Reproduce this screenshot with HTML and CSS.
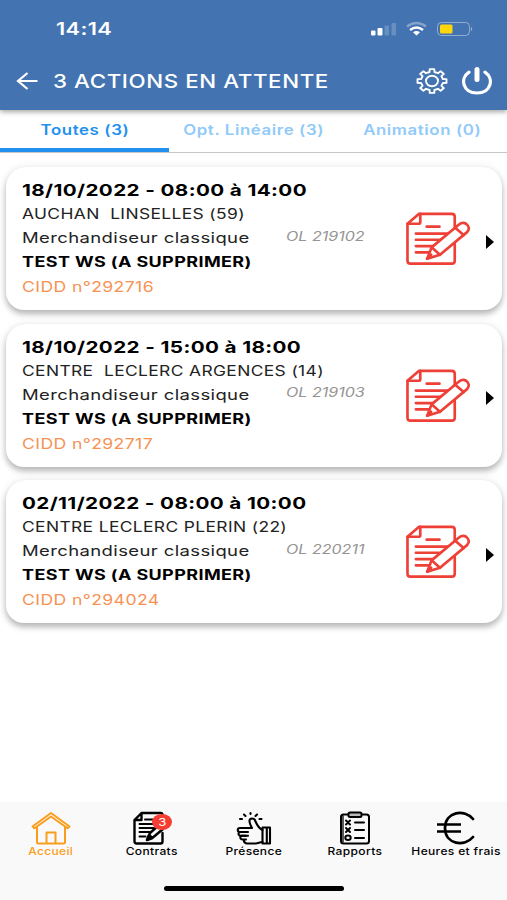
FILE: index.html
```html
<!DOCTYPE html>
<html lang="fr">
<head>
    <meta charset="UTF-8">
    <meta name="viewport" content="width=device-width, initial-scale=1.0">
    <title>Actions en attente</title>
    <link rel="stylesheet" href="styles.css">
</head>
<body>
    <svg width="0" height="0" class="defs">
        <symbol id="contract" viewBox="0 0 66 54">
            <g fill="none" stroke="currentColor" stroke-width="2.7" stroke-linejoin="round" stroke-linecap="round">
                <path d="M49.500 17V4.500q0-3-3-3H13L1.500 11.500v37.500q0 3 3 3h42q3 0 3-3V32"/>
                <path d="M1.500 11.500H13q1.500 0 1.500-1.500V1.500" />
                <path d="M21 14.500h13M10 21.500h34M10 27.800h27M10 34.200h20M10 40.500h14"/>
                <path class="pen" d="M21.500 47l4.500-11.500L53.500 12.500q4-3 7.500-1 5 4 1 8.500L34.500 43z"/>
                <path d="M26 35.500l8.500 7.500M50 15.500l8.500 7.500M21.500 47l4-4"/>
            </g>
        </symbol>
    </svg>

    <header class="header">
        <div class="status">
            <span class="time">14:14</span>
            <svg class="indicators" width="104" height="16" viewBox="0 0 104 16">
                <g fill="#fff">
                    <rect x="0" y="9.500" width="4.500" height="5" rx="1"/>
                    <rect x="6.500" y="7" width="5" height="7.500" rx="1"/>
                    <rect x="13.500" y="4.500" width="4.500" height="10" rx="1" opacity=".2"/>
                    <rect x="20.500" y="2" width="4.500" height="12.500" rx="1" opacity=".2"/>
                </g>
                <g fill="none" stroke="#fff" stroke-width="2.300">
                    <path d="M36 5.500q9.500-7 19 0" opacity=".35"/>
                    <path d="M39 9q6.500-5 13 0"/>
                </g>
                <path d="M42 11.200q3.500-2.400 7 0l-3.500 3.300z" fill="#fff"/>
                <rect x="66.500" y="1.500" width="32" height="13" rx="4" fill="none" stroke="#fff" opacity=".4"/>
                <path d="M100 6q2.500 2 0 4z" fill="#fff" opacity=".5"/>
                <rect x="69" y="3.500" width="12.500" height="9" rx="1.500" fill="#ffd60a"/>
            </svg>
        </div>
        <div class="title-bar">
            <svg class="back" width="22" height="18" viewBox="0 0 22 18" fill="none" stroke="#fff" stroke-width="2.200">
                <path d="M21.500 9H2M11.500 1L2 9l9.500 8"/>
            </svg>
            <h1 class="title">3 ACTIONS EN ATTENTE</h1>
            <svg class="gear" width="32" height="26" viewBox="0 0 32 26" fill="none" stroke="#fff" stroke-width="1.900" stroke-linejoin="round">
                <path d="M13.600 4l.1-2.900h4.600l.1 2.900L22 5.200l2.600-1.900 3.300 2.600-2.500 2.200 1.500 2.900 3.600.1v3.800l-3.600.1-1.500 2.900 2.500 2.200-3.300 2.600-2.600-1.900-3.600 1.200-.1 2.900h-4.600l-.1-2.900-3.600-1.200-2.600 1.900-3.300-2.600 2.500-2.200L5.100 15l-3.600-.1v-3.800l3.600-.1 1.500-2.900-2.500-2.200 3.300-2.600L10 5.200z"/>
                <ellipse cx="16" cy="13" rx="6" ry="5.200"/>
            </svg>
            <svg class="power" width="30" height="28" viewBox="0 0 30 28" fill="none" stroke="#fff" stroke-linecap="round">
                <path d="M7 5.200C-2.500 11.500 1 26 15 26S32.500 11.500 23 5.200" stroke-width="3.200"/>
                <path d="M15 2.500v10" stroke-width="5"/>
            </svg>
        </div>
    </header>

    <nav class="tabs">
        <a class="tab active"><span>Toutes (3)</span></a>
        <a class="tab"><span>Opt. Linéaire (3)</span></a>
        <a class="tab"><span>Animation (0)</span></a>
    </nav>

    <main class="list">
        <article class="card">
            <div class="info">
                <p class="date"><span>18/10/2022 - 08:00 à 14:00</span></p>
                <p class="place"><span>AUCHAN&nbsp; LINSELLES (59)</span></p>
                <p class="job"><span>Merchandiseur classique</span></p>
                <p class="mission"><span>TEST WS (A SUPPRIMER)</span></p>
                <p class="cidd"><span>CIDD n°292716</span></p>
            </div>
            <p class="ref"><span>OL 219102</span></p>
            <svg class="sign"><use href="#contract"/></svg>
            <i class="arrow"></i>
        </article>

        <article class="card">
            <div class="info">
                <p class="date"><span>18/10/2022 - 15:00 à 18:00</span></p>
                <p class="place"><span>CENTRE&nbsp; LECLERC ARGENCES (14)</span></p>
                <p class="job"><span>Merchandiseur classique</span></p>
                <p class="mission"><span>TEST WS (A SUPPRIMER)</span></p>
                <p class="cidd"><span>CIDD n°292717</span></p>
            </div>
            <p class="ref"><span>OL 219103</span></p>
            <svg class="sign"><use href="#contract"/></svg>
            <i class="arrow"></i>
        </article>

        <article class="card">
            <div class="info">
                <p class="date"><span>02/11/2022 - 08:00 à 10:00</span></p>
                <p class="place"><span>CENTRE LECLERC PLERIN (22)</span></p>
                <p class="job"><span>Merchandiseur classique</span></p>
                <p class="mission"><span>TEST WS (A SUPPRIMER)</span></p>
                <p class="cidd"><span>CIDD n°294024</span></p>
            </div>
            <p class="ref"><span>OL 220211</span></p>
            <svg class="sign"><use href="#contract"/></svg>
            <i class="arrow"></i>
        </article>
    </main>

    <footer class="bottom">
        <div class="menu">
            <a class="item current">
                <svg width="40" height="34" viewBox="0 0 40 34" fill="none" stroke="currentColor" stroke-width="2" stroke-linejoin="round">
                    <path d="M6 15v16q0 1.500 1.500 1.500h25Q34 32.500 34 31V15M20 2L1.500 15.500l2 1.800L20 5.500l16.500 11.800 2-1.800z"/>
                    <path d="M15.500 32V21.500h9V32"/>
                </svg>
                <span>Accueil</span>
            </a>
            <a class="item">
                <svg width="40" height="34" viewBox="0 0 40 34" fill="none" stroke="currentColor" stroke-width="2.400" stroke-linejoin="round" stroke-linecap="round">
                    <path d="M30.500 22v8.500q0 2-2 2h-24q-2 0-2-2V9L9.500 2h19q2 0 2 2v3M2.500 9h7V2"/>
                    <path d="M13 8.500h8M7.500 13h16M7.500 17h14M7.500 21h10M7.500 25.500h6" stroke-width="2"/>
                    <path d="M15 29l3-7L27 14l4 4-9.500 8z" fill="#f9f9f9"/>
                    <path d="M15 29l2-5 3.500 3z" fill="currentColor"/>
                </svg>
                <b class="badge"><span>3</span></b>
                <span>Contrats</span>
            </a>
            <a class="item">
                <svg width="40" height="34" viewBox="0 0 40 34" fill="none" stroke="currentColor" stroke-width="2.100" stroke-linejoin="round" stroke-linecap="round">
                    <path d="M29.500 19C26 17.500 24.500 15 22.500 10.500c-.8-4-6.500-4-6 0 .2 2.500 1.500 4.500 2.500 6.500H7c-3 0-3 4 0 4h6H7.500c-3 0-2.500 3.800.5 3.800h5H9c-2.500 0-2 3.700.5 3.700H13h-1.500c-1.500 2 .5 4 3 4h8c3 0 4-1.500 7-1.500"/>
                    <path d="M29.500 16.500H37V32.500h-7.500zM33.800 16.500v16M8 21h7M8.500 24.800H15"/>
                    <path d="M7 8h2M11 3.500l1.500 1.500M17.500 2v1M24 3.500L22.500 5M28.500 8h-2"/>
                </svg>
                <span>Présence</span>
            </a>
            <a class="item">
                <svg width="40" height="34" viewBox="0 0 40 34" fill="none" stroke="currentColor" stroke-width="2" stroke-linecap="round">
                    <rect x="6" y="3.500" width="28" height="29" rx="2.500"/>
                    <path d="M8 5v26" stroke-width="1.300"/>
                    <rect x="13.500" y="1.500" width="13" height="4.500" rx="1.500" fill="#bbb"/>
                    <path d="M11 9.500l4 4m0-4l-4 4M11 17l4 4m0-4l-4 4M20 11.500h9M20 19h9M20 27h9"/>
                    <ellipse cx="13" cy="26.800" rx="2.700" ry="2.200"/>
                </svg>
                <span>Rapports</span>
            </a>
            <a class="item">
                <svg width="40" height="34" viewBox="0 0 40 34" fill="none" stroke="currentColor" stroke-width="2.700">
                    <path d="M37 8C29-2 9 0 9 17s20 19 28 9" stroke-linecap="round"/>
                    <path d="M1 13.500h24M1 20.500h24"/>
                </svg>
                <span>Heures et frais</span>
            </a>
        </div>
        <div class="home-bar"></div>
    </footer>
</body>
</html>
```
FILE: styles.css
```css
* {
    box-sizing: border-box;
}

body {
    margin: 0;
    height: 900px;
    display: flex;
    flex-direction: column;
    background: #fff;
    color: #000;
    font-family: Inter, "Liberation Sans", sans-serif;
    overflow: hidden;
}

p, h1 {
    margin: 0;
    white-space: nowrap;
}

.defs {
    position: absolute;
}

.header {
    flex: none;
    height: 110px;
    background: #4373b1;
    color: #fff;
    box-shadow: 0 2px 5px rgba(0, 0, 0, 0.35);
    z-index: 1;
}

.status {
    display: flex;
    justify-content: space-between;
    align-items: center;
    height: 57px;
    padding: 0 32px 0 56px;
}

.time {
    font-size: 17px;
    font-weight: 600;
    letter-spacing: 0.3px;
    transform: scaleX(1.28);
    transform-origin: left;
}

.title-bar {
    display: flex;
    align-items: center;
    height: 48px;
    padding: 0 15px 0 16px;
}

.title {
    flex: 1;
    margin-left: 15px;
    font-size: 19px;
    font-weight: 500;
    letter-spacing: 0.5px;
    transform: scaleX(1.175);
    transform-origin: left;
}

.power {
    margin-left: 14px;
}

.tabs {
    flex: none;
    display: flex;
    height: 43px;
    border-bottom: 1px solid #c4c6ca;
}

.tab {
    flex: 1;
    height: 42px;
    text-align: center;
    line-height: 40px;
    font-size: 14px;
    font-weight: 600;
    color: #90caf9;
    white-space: nowrap;
}

.tab span {
    display: inline-block;
    letter-spacing: 0.5px;
    transform: scaleX(1.2);
}

.tab.active {
    color: #2190ee;
    border-bottom: 4px solid #2190ee;
}

.list {
    flex: 1;
    display: flex;
    flex-direction: column;
    gap: 13.5px;
    padding: 14px 5px 0 6px;
}

.card {
    position: relative;
    display: flex;
    align-items: center;
    height: 143px;
    padding: 1px 7px 0 16px;
    background: #fff;
    border-radius: 20px 20px 18px 18px;
    box-shadow: 0 4px 6px rgba(0, 0, 0, 0.27), 0 0 10px rgba(0, 0, 0, 0.07);
}

.info {
    width: 264px;
}

.info p {
    height: 24px;
    line-height: 24px;
    font-size: 14px;
    letter-spacing: 0.3px;
}

.info span, .ref span {
    display: inline-block;
    transform-origin: left;
}

.info .date {
    font-size: 16.5px;
    font-weight: 700;
}

.date span {
    transform: scaleX(1.252);
}

.info .place, .info .job {
    color: #222;
}

.place span {
    transform: scaleX(1.243);
}

.info .job {
    font-size: 14.5px;
}

.job span {
    transform: scaleX(1.275);
}

.info .mission {
    font-weight: 700;
}

.mission span {
    transform: scaleX(1.286);
}

.info .cidd {
    height: 26px;
    line-height: 26px;
    color: #f79254;
}

.cidd span {
    transform: scaleX(1.26);
}

.ref {
    width: 120px;
    margin-bottom: 6px;
    font-size: 12.5px;
    font-style: italic;
    color: #949494;
}

.ref span {
    transform: scaleX(1.285);
}

.sign {
    width: 65px;
    height: 54px;
    color: #ee4037;
}

.pen {
    fill: #fff;
}

.arrow {
    margin: 5px 0 0 15px;
    border-left: 8px solid #000;
    border-top: 7px solid transparent;
    border-bottom: 7px solid transparent;
}

.bottom {
    flex: none;
    height: 98px;
    background: #f9f9f9;
}

.menu {
    display: grid;
    grid-template-columns: repeat(5, 1fr);
    height: 84px;
    padding-top: 9px;
}

.item {
    position: relative;
    display: flex;
    flex-direction: column;
    align-items: center;
    font-size: 10.5px;
    font-weight: 500;
    line-height: 13px;
    color: #000;
    white-space: nowrap;
}

.item > span {
    letter-spacing: 0.3px;
    transform: scaleX(1.145);
}

.item.current {
    color: #f99d1c;
}

.badge {
    position: absolute;
    top: 3px;
    left: 51px;
    width: 20px;
    height: 16px;
    border-radius: 50%;
    background: #f53d33;
    color: #fff;
    font-size: 11px;
    font-weight: 400;
    line-height: 16px;
    text-align: center;
}

.badge span {
    display: inline-block;
    transform: scaleX(1.2);
}

.home-bar {
    width: 180px;
    height: 5px;
    margin: 0 auto;
    border-radius: 3px;
    background: #000;
}
```
